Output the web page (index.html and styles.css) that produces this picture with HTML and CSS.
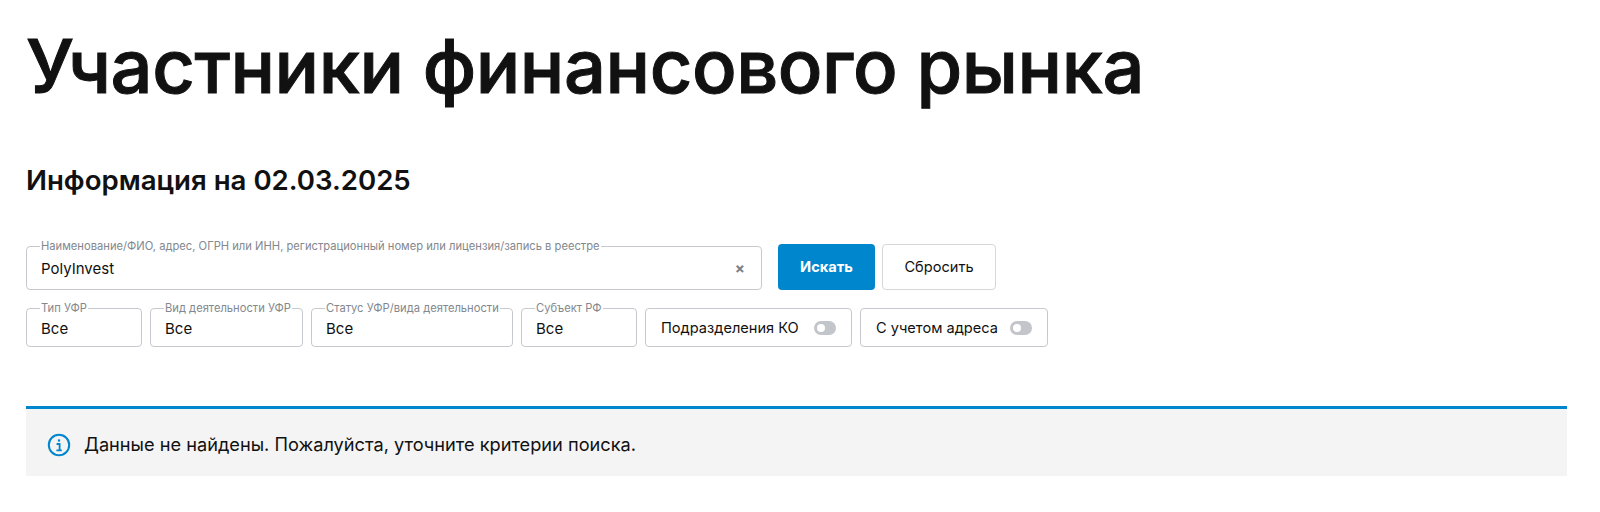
FILE: index.html
```html
<!DOCTYPE html>
<html lang="ru">
<head>
    <meta charset="UTF-8">
    <title>Участники финансового рынка</title>
    <link rel="stylesheet" href="styles.css">
</head>
<body>
    <h1 class="title">Участники финансового рынка</h1>
    <h2 class="subtitle">Информация на 02.03.2025</h2>

    <form class="search-row">
        <fieldset class="field field-search">
            <legend>Наименование/ФИО, адрес, ОГРН или ИНН, регистрационный номер или лицензия/запись в реестре</legend>
            <span class="value">PolyInvest</span>
            <span class="clear">×</span>
        </fieldset>
        <button type="button" class="btn btn-primary">Искать</button>
        <button type="button" class="btn">Сбросить</button>
    </form>

    <div class="filter-row">
        <fieldset class="field w-type"><legend>Тип УФР</legend><span class="value">Все</span></fieldset>
        <fieldset class="field w-kind"><legend>Вид деятельности УФР</legend><span class="value">Все</span></fieldset>
        <fieldset class="field w-status"><legend>Статус УФР/вида деятельности</legend><span class="value">Все</span></fieldset>
        <fieldset class="field w-region"><legend>Субъект РФ</legend><span class="value">Все</span></fieldset>
        <div class="toggle-box w-branch"><span>Подразделения КО</span><i class="toggle"></i></div>
        <div class="toggle-box w-address"><span>С учетом адреса</span><i class="toggle"></i></div>
    </div>

    <div class="notice">
        <svg class="notice-icon" width="24" height="24" viewBox="0 0 24 24" fill="none" stroke="#0086cd">
            <circle cx="12" cy="12" r="10.2" stroke-width="2"/>
            <path d="M12 6.4v2.2" stroke-width="2.2"/>
            <path d="M9.6 11h3v6.4M9.4 17.4h5.4" stroke-width="1.8"/>
        </svg>
        <span>Данные не найдены. Пожалуйста, уточните критерии поиска.</span>
    </div>
</body>
</html>
```

FILE: styles.css
```css
* {
    box-sizing: border-box;
}

body {
    margin: 0;
    padding: 0 33px 0 26px;
    background: #fff;
    color: #111;
    font-family: Inter, "Noto Sans", sans-serif;
}

.title {
    margin: 20px 0 0;
    font-size: 74px;
    line-height: 92px;
    font-weight: 500;
    letter-spacing: -0.43px;
    -webkit-text-stroke: 1px #111;
}

.subtitle {
    margin: 51px 0 0;
    font-size: 27.6px;
    line-height: 34px;
    font-weight: 600;
}

.search-row {
    display: flex;
    align-items: flex-end;
    gap: 7px;
    margin-top: 44px;
}

.filter-row {
    display: flex;
    align-items: flex-end;
    gap: 8px;
    margin-top: 13px;
}

.field {
    margin: 0;
    padding: 0 14px 4px;
    display: flex;
    align-items: center;
    border: 1px solid #c6c9cd;
    border-radius: 4px;
    height: 44px;
    min-width: 0;
}

.field legend {
    margin-left: -1px;
    padding: 0 1px;
    font-size: 11.2px;
    line-height: 11px;
    color: #83888e;
    white-space: nowrap;
}

.value {
    font-size: 15px;
}

.field-search {
    flex: 0 0 736px;
    height: 49px;
    margin-right: 9px;
}

.clear {
    margin-left: auto;
    margin-right: 2px;
    color: #7b8187;
    font-size: 15px;
    font-weight: 700;
}

.btn {
    height: 46px;
    padding: 0;
    width: 114px;
    border: 1px solid #d5d7da;
    border-radius: 4px;
    background: #fff;
    color: #111;
    font-family: inherit;
    font-size: 14.6px;
}

.btn-primary {
    width: 97px;
    border: none;
    background: #0086cd;
    color: #fff;
    font-weight: 700;
}

.w-type { width: 116px; }
.w-kind { width: 153px; }
.w-status { width: 202px; }
.w-region { width: 116px; }
.w-branch { width: 207px; }
.w-address { width: 188px; }

.toggle-box {
    display: flex;
    align-items: center;
    justify-content: space-between;
    height: 39px;
    padding: 0 15px;
    border: 1px solid #c6c9cd;
    border-radius: 4px;
    font-size: 14.6px;
}

.toggle {
    position: relative;
    width: 22px;
    height: 14px;
    border-radius: 7px;
    background: #c2c5ca;
}

.toggle::after {
    content: "";
    position: absolute;
    top: 3px;
    left: 3px;
    width: 8px;
    height: 8px;
    border-radius: 50%;
    background: #fff;
}

.notice {
    display: flex;
    align-items: center;
    gap: 13px;
    height: 70px;
    margin-top: 59px;
    padding: 3px 21px 0;
    border-top: 3px solid #0086cd;
    background: #f4f4f4;
    font-size: 18.2px;
}

.notice-icon {
    flex: none;
    margin-top: 2px;
}
```
